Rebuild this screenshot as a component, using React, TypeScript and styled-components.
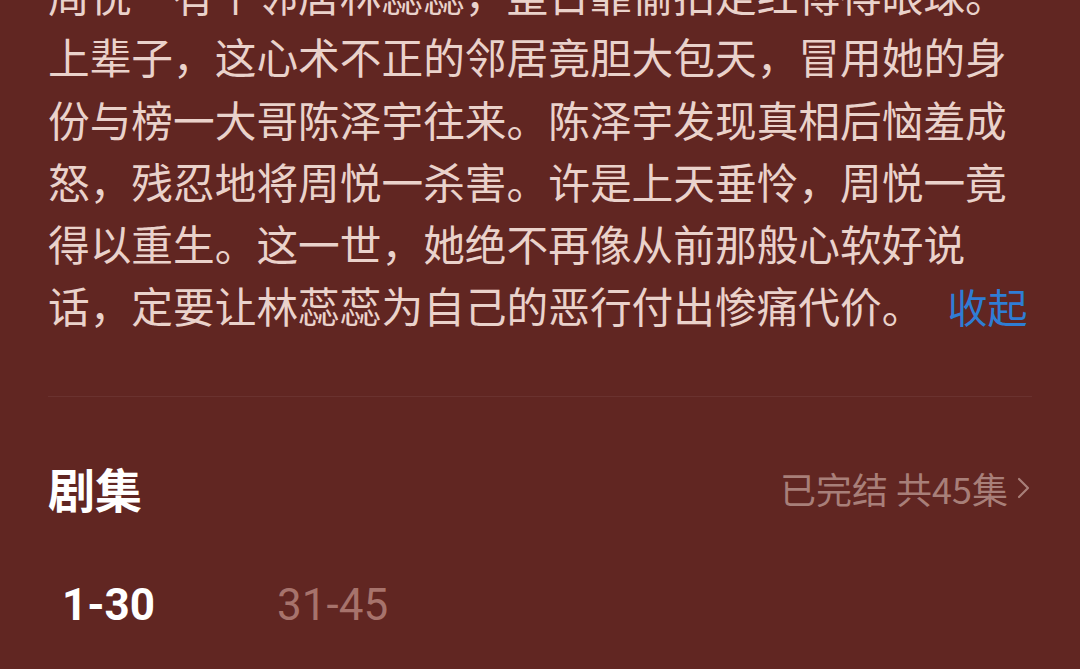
import React from "react";
import styled, { createGlobalStyle } from "styled-components";

const GlobalStyle = createGlobalStyle`
  html, body {
    margin: 0;
    padding: 0;
    background: #612622;
    overflow: hidden;
  }
  body {
    font-family: "Noto Sans CJK SC", "Noto Sans", sans-serif;
  }
`;

const Page = styled.main`
  width: 1080px;
  height: 669px;
  box-sizing: border-box;
  padding: 0 48px;
  background: #612622;
  overflow: hidden;
`;

const Synopsis = styled.p`
  margin: -37px 0 0;
  font-size: 41.7px;
  line-height: 62.25px;
  color: #ead2cb;
  word-break: break-all;
`;

const Collapse = styled.span`
  margin-left: 24px;
  font-size: 40px;
  color: #2f7dd4;
  cursor: pointer;
`;

const Divider = styled.hr`
  margin: 58px 0 0;
  border: 0;
  height: 1px;
  background: rgba(255, 255, 255, 0.06);
`;

const SectionHeader = styled.header`
  display: flex;
  align-items: center;
  justify-content: space-between;
  height: 64px;
  margin-top: 59px;
`;

const SectionTitle = styled.h2`
  margin: 0;
  font-size: 47px;
  font-weight: 700;
  color: #ffffff;
  line-height: 64px;
`;

const Meta = styled.a`
  display: flex;
  align-items: center;
  gap: 9px;
  font-size: 36px;
  color: #a87f79;
  text-decoration: none;
  margin-right: 2px;
`;

const Tabs = styled.nav`
  display: flex;
  align-items: center;
  gap: 122px;
  margin-top: 58px;
  padding-left: 14px;
`;

const Tab = styled.button<{ $active?: boolean }>`
  border: 0;
  background: none;
  padding: 0;
  font-family: Roboto, "Noto Sans", sans-serif;
  font-size: 44px;
  line-height: 54px;
  font-weight: ${(p) => (p.$active ? 700 : 400)};
  color: ${(p) => (p.$active ? "#ffffff" : "#a7736c")};
`;

const Chevron = () => (
  <svg width="13" height="24" viewBox="0 0 13 24" fill="none">
    <polyline
      points="2,3 11,12 2,21"
      stroke="#a87f79"
      strokeWidth="2.2"
      strokeLinecap="round"
      strokeLinejoin="round"
    />
  </svg>
);

export default function App() {
  return (
    <>
      <GlobalStyle />
      <Page>
        <Synopsis>
          周悦一有个邻居林蕊蕊，整日靠偷拍走红博得眼球。上辈子，这心术不正的邻居竟胆大包天，冒用她的身份与榜一大哥陈泽宇往来。陈泽宇发现真相后恼羞成怒，残忍地将周悦一杀害。许是上天垂怜，周悦一竟得以重生。这一世，她绝不再像从前那般心软好说话，定要让林蕊蕊为自己的恶行付出惨痛代价。
          <Collapse>收起</Collapse>
        </Synopsis>
        <Divider />
        <SectionHeader>
          <SectionTitle>剧集</SectionTitle>
          <Meta>
            已完结 共45集
            <Chevron />
          </Meta>
        </SectionHeader>
        <Tabs>
          <Tab $active>1-30</Tab>
          <Tab>31-45</Tab>
        </Tabs>
      </Page>
    </>
  );
}
